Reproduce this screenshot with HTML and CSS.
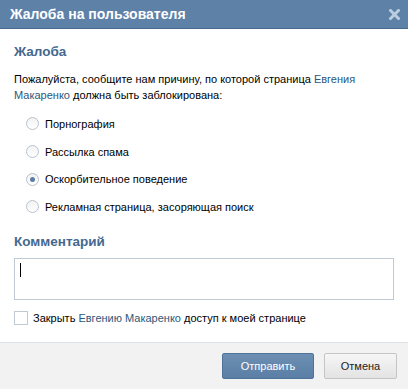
FILE: index.html
```html
<!doctype html>
<html lang="ru">
  <head>
    <meta charset="UTF-8" />
    <meta name="viewport" content="width=device-width, initial-scale=1.0" />
    <title>Жалоба на пользователя</title>
    <link rel="stylesheet" href="styles.css">
  </head>
  <body>
    <div class="box">
      <div class="box-title">
        <span>Жалоба на пользователя</span>
        <svg class="box-close" width="11" height="11" viewBox="0 0 11 11">
          <path d="M1.5 1.5 L9.5 9.5 M9.5 1.5 L1.5 9.5" stroke="#bccde0" stroke-width="3" stroke-linecap="square" />
        </svg>
      </div>

      <div class="box-body">
        <h3 class="section-title">Жалоба</h3>
        <p class="intro">
          Пожалуйста, сообщите нам причину, по которой страница <a href="#">Евгения</a><br><a href="#">Макаренко</a> должна быть заблокирована:
        </p>

        <div class="reasons">
          <div class="radio-row"><span class="radio"></span>Порнография</div>
          <div class="radio-row"><span class="radio"></span>Рассылка спама</div>
          <div class="radio-row"><span class="radio radio-on"></span>Оскорбительное поведение</div>
          <div class="radio-row"><span class="radio"></span>Рекламная страница, засоряющая поиск</div>
        </div>

        <h3 class="section-title">Комментарий</h3>
        <div class="comment"><span class="caret"></span></div>

        <div class="check-row">
          <span class="checkbox"></span>
          <span>Закрыть <a href="#">Евгению Макаренко</a> доступ к моей странице</span>
        </div>
      </div>

      <div class="box-controls">
        <button class="btn btn-blue">Отправить</button>
        <button class="btn btn-gray">Отмена</button>
      </div>
    </div>
  </body>
</html>
```

FILE: styles.css
```css
body {
  margin: 0;
  font-family: 'Liberation Sans', Arial, sans-serif;
  font-size: 11px;
  color: #000;
  background-color: #fff;
}
a {
  color: #2b587a;
  text-decoration: none;
}
.box {
  width: 408px;
  height: 389px;
  display: flex;
  flex-direction: column;
}
.box-title {
  height: 28px;
  display: flex;
  align-items: center;
  justify-content: space-between;
  padding: 0 8px 0 10px;
  background-color: #5e81a8;
  border-bottom: 1px solid #45688e;
  color: #fff;
  font-size: 14px;
  font-weight: bold;
}
.box-close {
  display: block;
}
.box-body {
  flex: 1;
  padding: 14px 14px 0;
}
.section-title {
  margin: 0;
  font-size: 13.5px;
  line-height: 18px;
  font-weight: bold;
  color: #45688e;
}
.intro {
  margin: 10px 0 0;
  line-height: 16px;
}
.reasons {
  margin: 7px 0 12px;
  padding-left: 12px;
}
.radio-row {
  display: flex;
  align-items: center;
  height: 27.7px;
  gap: 6px;
}
.radio {
  width: 13px;
  height: 13px;
  box-sizing: border-box;
  border: 1px solid #b8c3ce;
  border-radius: 50%;
  background: linear-gradient(#f2f2f2, #fff);
  display: flex;
  align-items: center;
  justify-content: center;
}
.radio-on::after {
  content: '';
  width: 5px;
  height: 5px;
  border-radius: 50%;
  background-color: #5c7ea4;
}
.comment {
  margin-top: 7px;
  height: 42px;
  box-sizing: border-box;
  border: 1px solid #c0cad5;
  padding: 4px 5px;
}
.caret {
  display: block;
  width: 1px;
  height: 14px;
  background-color: #000;
}
.check-row {
  display: flex;
  align-items: center;
  gap: 5px;
  margin-top: 10px;
  height: 16px;
}
.checkbox {
  width: 14px;
  height: 14px;
  box-sizing: border-box;
  border: 1px solid #c0cad5;
  background-color: #fff;
}
.box-controls {
  display: flex;
  justify-content: flex-end;
  gap: 10px;
  padding: 10px 11px 10px;
  background-color: #f2f2f2;
  border-top: 1px solid #dce1e6;
}
.btn {
  height: 26px;
  font-family: 'Liberation Sans', Arial, sans-serif;
  font-size: 11px;
  border-radius: 2px;
  cursor: pointer;
}
.btn-blue {
  width: 92px;
  color: #fff;
  border: 1px solid #4f729a;
  background: linear-gradient(#6d8fb3, #5a7ea5);
}
.btn-gray {
  width: 73px;
  color: #222;
  border: 1px solid #c5c5c5;
  background: linear-gradient(#f6f6f6, #e3e3e3);
}
```
